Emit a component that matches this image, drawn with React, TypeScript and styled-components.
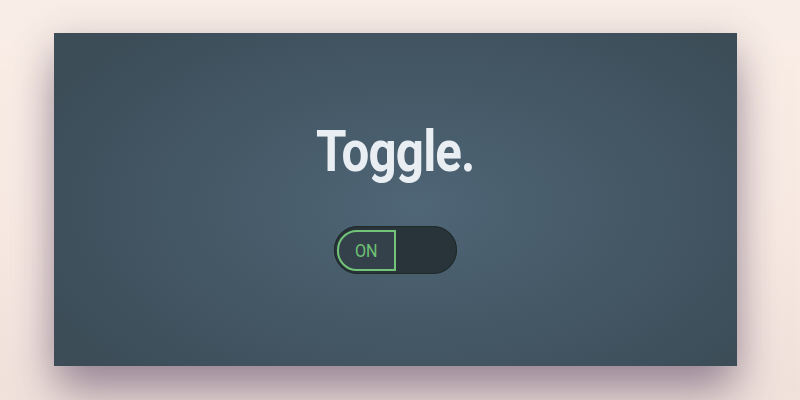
import React from "react";
import styled, { createGlobalStyle } from "styled-components";

const GlobalStyle = createGlobalStyle`
  html, body {
    margin: 0;
    padding: 0;
    background: #f8ece6;
  }
  #root {
    height: 400px;
  }
`;

const Page = styled.div`
  width: 800px;
  height: 400px;
  box-sizing: border-box;
  padding: 33px 63px 34px 54px;
  background: linear-gradient(180deg, #f9eee7 0%, #f7e9e2 60%, #f0e1db 100%);
  display: flex;
`;

const Panel = styled.section`
  flex: 1;
  display: flex;
  flex-direction: column;
  align-items: center;
  background: radial-gradient(
    ellipse 60% 70% at 53% 52%,
    #4f6677 0%,
    #465a68 45%,
    #3c4d58 100%
  );
  box-shadow: 0 30px 42px -4px rgba(95, 75, 105, 0.5),
    0 8px 34px rgba(90, 70, 100, 0.25);
`;

const Title = styled.h1`
  margin: 85px 0 0 0;
  font-family: Roboto, "Liberation Sans", sans-serif;
  font-weight: 700;
  font-size: 58px;
  line-height: 66px;
  letter-spacing: -1px;
  color: #e9eef3;
  transform: scaleX(0.85);
`;

const Switch = styled.div`
  margin: 42px 0 0 0;
  width: 123px;
  height: 48px;
  box-sizing: border-box;
  border-radius: 24px;
  background: #29333a;
  box-shadow: inset 0 0 0 1px #1f2a29;
  padding: 4px 0 3px 3px;
  display: flex;
`;

const Knob = styled.div<{ $on: boolean }>`
  width: 59px;
  box-sizing: border-box;
  border: 2px solid ${(p) => (p.$on ? "#72c578" : "#7c8890")};
  border-radius: 20px 0 0 20px;
  background: #34414a;
  display: flex;
  align-items: center;
  justify-content: center;
  font-family: Roboto, "Liberation Sans", sans-serif;
  font-size: 19px;
  color: ${(p) => (p.$on ? "#6fc274" : "#9aa4ab")};
  span {
    display: inline-block;
    transform: scaleX(0.85);
  }
`;

export default function App() {
  return (
    <>
      <GlobalStyle />
      <Page>
        <Panel>
          <Title>Toggle.</Title>
          <Switch>
            <Knob $on>
              <span>ON</span>
            </Knob>
          </Switch>
        </Panel>
      </Page>
    </>
  );
}
